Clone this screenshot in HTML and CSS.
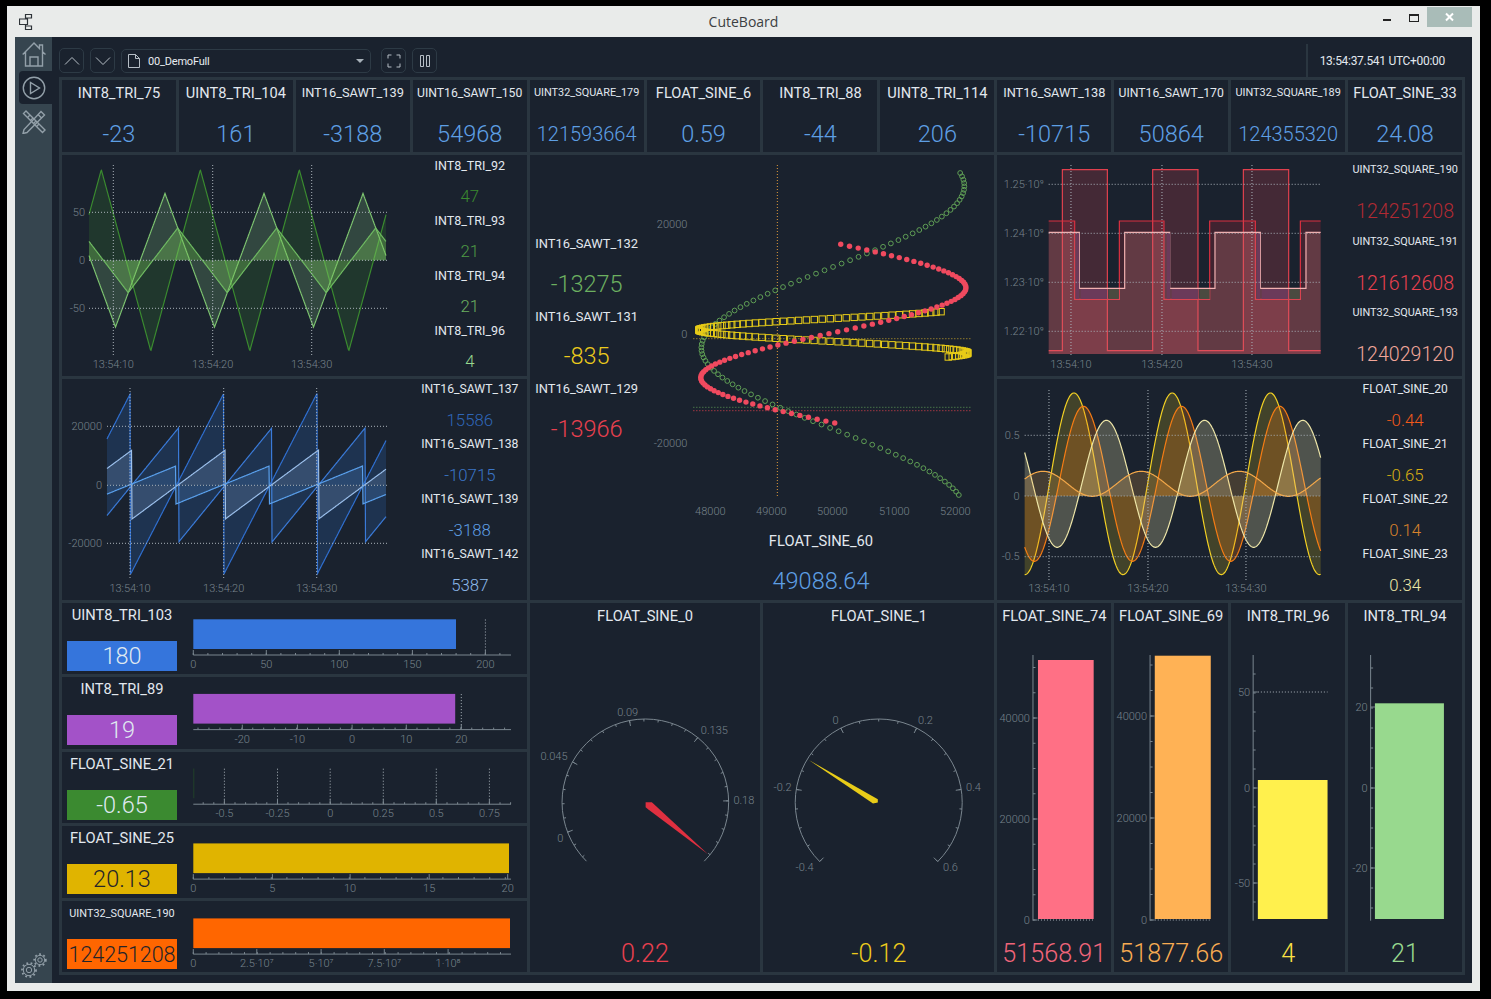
FILE: index.html
```html
<!DOCTYPE html>
<html>
<head>
    <title>CuteBoard</title>
    <meta charset="utf-8" />
    <link rel="stylesheet" href="styles.css">
</head>
<body>
<div class="window">
    <div class="titlebar">
        <svg class="appicon" width="14" height="16" viewBox="0 0 14 16">
            <path d="M6.5 .5h6v3.5h-6zM6.5 12h6v3.5h-6zM.5 5h8v5.5h-8zM6.5 4v1M6.5 10.5v1.5"/>
        </svg>
        <div class="wintitle">CuteBoard</div>
        <div class="winctl">
            <span class="minbtn"></span>
            <span class="maxbtn"></span>
            <span class="closebtn">
                <svg width="10" height="10" viewBox="0 0 10 10"><path d="M1 1.5l7 7M8 1.5l-7 7"/></svg>
            </span>
        </div>
    </div>
    <div class="client">
        <div class="sidebar">
            <svg class="sideicon" width="24" height="25" viewBox="0 0 24 25">
                <path d="M.7 12.5L12 1l5.500 5.600V3h3v6.700l3 2.800M3.500 10v14h17V10M8 24v-9h8v9"/>
            </svg>
            <div class="sidesel">
                <svg class="sideicon" width="24" height="24" viewBox="0 0 24 24">
                    <circle cx="12" cy="12" r="10.7"/><path d="M8.500 6.500v11l9-5.500z"/>
                </svg>
            </div>
            <svg class="sideicon" width="24" height="24" viewBox="0 0 24 24">
                <path d="M4 1l19 19-2.500 2.500L1.500 3.500zM8 5l-2 2M11 8l-2 2M14 11l-2 2M17 14l-2 2"/>
                <path d="M19 1.500l3.500 3.500L5 22.500l-4 1 1-4zM16 4.500l3.500 3.500"/>
            </svg>
            <svg class="sideicon gears" width="26" height="26" viewBox="0 0 26 26">
                <circle cx="8" cy="17" r="5.7"/><circle cx="8" cy="17" r="2.7"/>
                <circle class="teeth" cx="8" cy="17" r="7"/>
                <circle cx="19" cy="7" r="4.7"/><circle cx="19" cy="7" r="2.2"/>
                <circle class="teeth" cx="19" cy="7" r="5.8"/>
            </svg>
        </div>
        <div class="mainpart">
            <div class="toolbar">
                <div class="toolbtn"><svg width="16" height="10" viewBox="0 0 16 10"><path d="M1 8.500l7-7 7 7"/></svg></div>
                <div class="toolbtn"><svg width="16" height="10" viewBox="0 0 16 10"><path d="M1 1.500l7 7 7-7"/></svg></div>
                <div class="combo">
                    <svg width="12" height="14" viewBox="0 0 12 14"><path d="M.5 .5h7l4 4v9h-11zM7.500 .5v4h4"/></svg>
                    <span class="comboname">00_DemoFull</span>
                    <span class="comboarrow"></span>
                </div>
                <div class="toolbtn"><svg width="14" height="14" viewBox="0 0 14 14"><path d="M1 4.500V1h3.500M9.500 1H13v3.500M13 9.500V13H9.500M4.500 13H1V9.500"/></svg></div>
                <div class="toolbtn"><svg width="10" height="12" viewBox="0 0 10 12"><path d="M.5 .5h3v11h-3zM6.500 .5h3v11h-3z"/></svg></div>
                <div class="clock">13:54:37.541 UTC+00:00</div>
            </div>

            <div class="board">
                <div class="cell top"><div class="name s16">INT8_TRI_75</div><div class="val blue">-23</div></div>
                <div class="cell top"><div class="name s16">UINT8_TRI_104</div><div class="val blue">161</div></div>
                <div class="cell top"><div class="name s14">INT16_SAWT_139</div><div class="val blue">-3188</div></div>
                <div class="cell top"><div class="name s13">UINT16_SAWT_150</div><div class="val blue">54968</div></div>
                <div class="cell top"><div class="name s11">UINT32_SQUARE_179</div><div class="val blue small">121593664</div></div>
                <div class="cell top"><div class="name s16">FLOAT_SINE_6</div><div class="val blue">0.59</div></div>
                <div class="cell top"><div class="name s16">INT8_TRI_88</div><div class="val blue">-44</div></div>
                <div class="cell top"><div class="name s16">UINT8_TRI_114</div><div class="val blue">206</div></div>
                <div class="cell top"><div class="name s14">INT16_SAWT_138</div><div class="val blue">-10715</div></div>
                <div class="cell top"><div class="name s13">UINT16_SAWT_170</div><div class="val blue">50864</div></div>
                <div class="cell top"><div class="name s11">UINT32_SQUARE_189</div><div class="val blue small">124355320</div></div>
                <div class="cell top"><div class="name s16">FLOAT_SINE_33</div><div class="val blue">24.08</div></div>

                <div class="cell wide chartcell">
                    <svg id="triChart" class="plot"></svg>
                    <div class="legend">
                        <div class="leg"><div class="name s12b">INT8_TRI_92</div><div class="val lv green1">47</div></div>
                        <div class="leg"><div class="name s12b">INT8_TRI_93</div><div class="val lv green2">21</div></div>
                        <div class="leg"><div class="name s12b">INT8_TRI_94</div><div class="val lv green3">21</div></div>
                        <div class="leg"><div class="name s12b">INT8_TRI_96</div><div class="val lv green4">4</div></div>
                    </div>
                </div>

                <div class="cell wide scatter">
                    <div class="scatlegend">
                        <div class="scatitem"><div class="name s13b">INT16_SAWT_132</div><div class="val green3">-13275</div></div>
                        <div class="scatitem"><div class="name s13b">INT16_SAWT_131</div><div class="val yellow">-835</div></div>
                        <div class="scatitem"><div class="name s13b">INT16_SAWT_129</div><div class="val red">-13966</div></div>
                    </div>
                    <div class="scatright">
                        <svg id="scatChart" class="scatplot"></svg>
                        <div class="name s15 scatname">FLOAT_SINE_60</div>
                        <div class="val blue scatval">49088.64</div>
                    </div>
                </div>

                <div class="cell wide chartcell">
                    <svg id="squareChart" class="plot"></svg>
                    <div class="legend three">
                        <div class="leg"><div class="name s11">UINT32_SQUARE_190</div><div class="val lv big red1">124251208</div></div>
                        <div class="leg"><div class="name s11">UINT32_SQUARE_191</div><div class="val lv big red">121612608</div></div>
                        <div class="leg"><div class="name s11">UINT32_SQUARE_193</div><div class="val lv big pink">124029120</div></div>
                    </div>
                </div>

                <div class="cell wide chartcell">
                    <svg id="sawChart" class="plot"></svg>
                    <div class="legend">
                        <div class="leg"><div class="name s13">INT16_SAWT_137</div><div class="val lv blue1">15586</div></div>
                        <div class="leg"><div class="name s13">INT16_SAWT_138</div><div class="val lv blue2">-10715</div></div>
                        <div class="leg"><div class="name s13">INT16_SAWT_139</div><div class="val lv blue">-3188</div></div>
                        <div class="leg"><div class="name s13">INT16_SAWT_142</div><div class="val lv blue3">5387</div></div>
                    </div>
                </div>

                <div class="cell wide chartcell">
                    <svg id="sineChart" class="plot"></svg>
                    <div class="legend">
                        <div class="leg"><div class="name s12">FLOAT_SINE_20</div><div class="val lv orange">-0.44</div></div>
                        <div class="leg"><div class="name s12">FLOAT_SINE_21</div><div class="val lv yellow2">-0.65</div></div>
                        <div class="leg"><div class="name s12">FLOAT_SINE_22</div><div class="val lv orange2">0.14</div></div>
                        <div class="leg"><div class="name s12">FLOAT_SINE_23</div><div class="val lv pale">0.34</div></div>
                    </div>
                </div>

                <div class="bars">
                    <div class="cell barrow">
                        <div class="barleft"><div class="name s15">UINT8_TRI_103</div><div class="barbox bg-blue">180</div></div>
                        <svg id="hbar1" class="hbar"></svg>
                    </div>
                    <div class="cell barrow">
                        <div class="barleft"><div class="name s15">INT8_TRI_89</div><div class="barbox bg-purple">19</div></div>
                        <svg id="hbar2" class="hbar"></svg>
                    </div>
                    <div class="cell barrow">
                        <div class="barleft"><div class="name s15">FLOAT_SINE_21</div><div class="barbox bg-green">-0.65</div></div>
                        <svg id="hbar3" class="hbar"></svg>
                    </div>
                    <div class="cell barrow">
                        <div class="barleft"><div class="name s15">FLOAT_SINE_25</div><div class="barbox bg-gold">20.13</div></div>
                        <svg id="hbar4" class="hbar"></svg>
                    </div>
                    <div class="cell barrow">
                        <div class="barleft"><div class="name s11">UINT32_SQUARE_190</div><div class="barbox bg-orange tight">124251208</div></div>
                        <svg id="hbar5" class="hbar"></svg>
                    </div>
                </div>

                <div class="cell tall two">
                    <div class="name s15">FLOAT_SINE_0</div>
                    <svg id="gauge1" class="tallplot"></svg>
                    <div class="val red">0.22</div>
                </div>
                <div class="cell tall two">
                    <div class="name s15">FLOAT_SINE_1</div>
                    <svg id="gauge2" class="tallplot"></svg>
                    <div class="val yellow">-0.12</div>
                </div>
                <div class="cell tall">
                    <div class="name s15">FLOAT_SINE_74</div>
                    <svg id="vbar1" class="tallplot"></svg>
                    <div class="val pinkred">51568.91</div>
                </div>
                <div class="cell tall">
                    <div class="name s15">FLOAT_SINE_69</div>
                    <svg id="vbar2" class="tallplot"></svg>
                    <div class="val amber">51877.66</div>
                </div>
                <div class="cell tall">
                    <div class="name s15">INT8_TRI_96</div>
                    <svg id="vbar3" class="tallplot"></svg>
                    <div class="val yellow3">4</div>
                </div>
                <div class="cell tall">
                    <div class="name s15">INT8_TRI_94</div>
                    <svg id="vbar4" class="tallplot"></svg>
                    <div class="val green4">21</div>
                </div>
            </div>
        </div>
    </div>
</div>
<script src="charts.js"></script>
</body>
</html>
```
FILE: styles.css
```css
* {box-sizing: border-box;}
html, body {margin: 0; background: #000; height: 100%; overflow: hidden;}
body {font-family: Roboto, "Liberation Sans", sans-serif; color: #e2e8ee;}

.window {
    margin: 6px 0 0 7px;
    width: 1473px;
    height: 985px;
    padding: 0 8px 8px;
    background: #e9ebea;
    display: flex;
    flex-direction: column;}
.titlebar {
    height: 31px;
    flex: none;
    display: grid;
    grid-template-columns: 1fr auto 1fr;}
.appicon {margin: 8px 0 0 4px;}
.appicon path {fill: none; stroke: #2e3338; stroke-width: 1.2;}
.wintitle {font: 14px/31px "Open Sans", sans-serif; color: #3c4042;}
.winctl {display: flex; justify-content: flex-end; align-items: flex-start;}
.minbtn {width: 8px; height: 2px; background: #222; margin: 13px 18px 0 0;}
.maxbtn {width: 10px; height: 8px; border: 1px solid #222; border-top-width: 2px; margin: 8px 8px 0 0;}
.closebtn {
    width: 45px;
    height: 20px;
    margin-top: 1px;
    background: #a9bcb8;
    display: flex;
    align-items: center;
    justify-content: center;}
.closebtn path {fill: none; stroke: #fff; stroke-width: 2;}

.client {flex: 1; display: flex; background: #1a222e; min-height: 0;}
.sidebar {
    width: 37px;
    flex: none;
    background: #36454f;
    display: flex;
    flex-direction: column;
    align-items: center;
    padding-top: 5px;}
.sideicon {display: block; flex: none;}
.sideicon path, .sideicon circle {fill: none; stroke: #93a0a9; stroke-width: 1.4;}
.sidesel {
    width: 33px;
    height: 33px;
    margin: 4px 0 6px 3px;
    padding-right: 2px;
    background: #1a222e;
    border-radius: 4px 0 0 4px;
    display: flex;
    align-items: center;
    justify-content: center;}
.gears {margin-top: auto; margin-bottom: 4px;}
.gears circle {stroke-width: 1;}
.gears circle.teeth {stroke-width: 1.8; stroke-dasharray: 1.8 2.5;}

.mainpart {flex: 1; padding-left: 7px; padding-right: 7px; min-width: 0;}
.toolbar {height: 40px; display: flex; align-items: flex-end; padding-bottom: 4px;}
.toolbtn {
    width: 25px;
    height: 25px;
    margin-right: 6px;
    border: 1px solid #2d3a45;
    border-radius: 5px;
    display: flex;
    align-items: center;
    justify-content: center;}
.toolbtn path, .combo path {fill: none; stroke: #b6bec6; stroke-width: 1;}
.combo {
    width: 250px;
    height: 24px;
    margin-right: 10px;
    border: 1px solid #2d3a45;
    border-radius: 5px;
    display: flex;
    align-items: center;
    padding: 0 6px;}
.comboname {font-size: 11px; margin-left: 8px; flex: 1; letter-spacing: -.2px; color: #e8ecf0;}
.comboarrow {width: 0; height: 0; border: 4px solid transparent; border-top: 4px solid #a8b1b9; border-bottom: 0;}
.clock {
    margin-left: auto;
    align-self: stretch;
    margin-top: 7px;
    margin-bottom: -4px;
    border-left: 2px solid #2a3640;
    padding: 10px 20px 0 12px;
    font-size: 12px;
    letter-spacing: -.3px;
    color: #e2e8ee;}

.board {
    height: 898px;
    background: #2a3640;
    padding: 3px;
    display: grid;
    grid-template-columns: repeat(12, 1fr);
    grid-template-rows: 72px 221px 221px 369px;
    gap: 3px;}
.cell {background: #1a222e; min-width: 0; overflow: hidden;}
.name {text-align: center; white-space: nowrap; color: #e2e8ee;}
.s16 {font-size: 14.6px;}
.s15 {font-size: 14.7px;}
.s14 {font-size: 12.8px;}
.s13b {font-size: 12.9px;}
.s13 {font-size: 12.2px;}
.s12b {font-size: 12.5px;}
.s12 {font-size: 12px;}
.s11 {font-size: 10.9px;}
.val {text-align: center; font-weight: 300; font-size: 23.5px; white-space: nowrap;}
.val.small {font-size: 20px;}

.blue {color: #5e9fe4;}
.blue1 {color: #2f66b8;}
.blue2 {color: #3b76c8;}
.blue3 {color: #8cb8ea;}
.green1 {color: #3a8a2f;}
.green2 {color: #4e9a45;}
.green3 {color: #6cb060;}
.green4 {color: #98d98e;}
.red {color: #e8404f;}
.red1 {color: #b02a33;}
.pink {color: #f2a79a;}
.pinkred {color: #f0657a;}
.amber {color: #f8ac52;}
.yellow {color: #eccb1c;}
.yellow2 {color: #d8ae12;}
.yellow3 {color: #fbe044;}
.orange {color: #f2591a;}
.orange2 {color: #d8822c;}
.pale {color: #eee8a8;}

.top .name {height: 26px; line-height: 26px;}
.top .val {line-height: 36px; margin-top: 10px;}

.chartcell {grid-column: span 4; display: flex;}
.plot {width: 351px; height: 100%; flex: none; display: block;}
.legend {flex: 1; min-width: 0;}
.leg {height: 55px;}
.leg .name {height: 21px; line-height: 21px;}
.val.lv {font-size: 16.8px; line-height: 28px; margin-top: 6px;}
.three .leg {height: 71.5px;}
.three .leg .name {height: 30px; line-height: 30px;}
.val.lv.big {font-size: 19.6px; line-height: 30px; margin-top: 12px;}

.scatter {grid-column: span 4; grid-row: span 2; display: flex;}
.scatlegend {width: 114px; flex: none; padding-top: 78px;}
.scatitem {height: 72.7px;}
.scatitem .name {height: 21px; line-height: 21px;}
.scatitem .val {line-height: 28px; margin-top: 15.5px;}
.scatright {flex: 1; min-width: 0;}
.scatplot {display: block; width: 100%; height: 372px;}
.scatname {line-height: 28px; padding-left: 4px;}
.scatval {line-height: 38px; margin-top: 7px; padding-left: 4px;}

.bars {grid-column: span 4; display: grid; grid-template-rows: repeat(5, 1fr); gap: 3px; min-height: 0;}
.barrow {display: flex;}
.barleft {width: 115px; flex: none; padding-left: 5px;}
.barleft .name {height: 25px; line-height: 25px;}
.barbox {
    height: 30px;
    margin-top: 13px;
    text-align: center;
    font-weight: 300;
    font-size: 23.5px;
    line-height: 31px;
    color: #dfe8f0;}
.bg-blue {background: #3575dc;}
.bg-purple {background: #a352c8;}
.bg-green {background: #3b8a30;}
.bg-gold {background: #e0b400; color: #24242a;}
.bg-orange {background: #ff6600; color: #24242a;}
.tight {font-size: 21.6px; letter-spacing: -.1px;}
.hbar {flex: 1; min-width: 0; height: 100%; display: block;}

.tall {display: grid; grid-template-rows: 25px 1fr 38px;}
.tall.two {grid-column: span 2;}
.tall .name {line-height: 26px;}
.tall .val {line-height: 40px; font-size: 25.2px;}
.tallplot {display: block; width: 100%; height: 100%;}

svg text {font-family: Roboto, "Liberation Sans", sans-serif; font-size: 11px; font-weight: 300; fill: #77828c; dominant-baseline: central;}
.dots {stroke: #aab3bb; stroke-width: 1; stroke-dasharray: 1 2; fill: none;}
.axis {stroke: #7a868f; stroke-width: 1; fill: none;}
```
FILE: charts.js
```js
// every plot uses page coordinates, so numbers read straight off the screen
function open(id) {
    let s = document.getElementById(id);
    let r = s.getBoundingClientRect();
    s.setAttribute('viewBox', [r.left, r.top, r.width, r.height].join(' '));
    return s;
}
function dots(x1, y1, x2, y2, color) {
    let c = color ? ` style="stroke:${color}"` : '';
    return `<line class="dots" x1="${x1}" y1="${y1}" x2="${x2}" y2="${y2}"${c}/>`;
}
function seg(x1, y1, x2, y2) {
    return `<line class="axis" x1="${x1}" y1="${y1}" x2="${x2}" y2="${y2}"/>`;
}
function label(x, y, str, anchor) {
    return `<text x="${x}" y="${y}" text-anchor="${anchor || 'middle'}">${str}</text>`;
}
function area(pts, base, stroke, fill) {
    let d = 'M' + pts.map(p => p[0].toFixed(1) + ' ' + p[1].toFixed(1)).join('L');
    let last = pts[pts.length - 1][0], first = pts[0][0];
    return `<path d="${d}L${last} ${base}L${first} ${base}Z" fill="${fill}"/>` +
        `<path d="${d}" fill="none" stroke="${stroke}" stroke-width="1.2"/>`;
}
function sample(x0, x1, fn) {
    let pts = [];
    for (let x = x0; x <= x1; x += .5) pts.push([x, fn(x)]);
    return pts;
}
function mod1(v) {return v - Math.floor(v);}

function timeGrid(xs, top, bottom, labelY) {
    let out = '', names = ['13:54:10', '13:54:20', '13:54:30'];
    xs.forEach((x, i) => {
        out += dots(x, top, x, bottom);
        out += label(x, labelY, names[i]);
    });
    return out;
}

/* triangles */
function tri(peak, period, zero, amp) {
    return x => {
        let p = mod1((x - peak) / period);
        return zero - amp * (p < .5 ? 1 - 4 * p : 4 * p - 3);
    };
}
let c = open('triChart');
c.innerHTML =
    area(sample(89, 386, tri(101.3, 99, 260.3, 90.6)), 260.3, '#3a8a2f', 'rgba(58,138,47,.2)') +
    area(sample(89, 386, tri(165, 99, 260.3, 66.8)), 260.3, '#7cc26f', 'rgba(150,220,140,.2)') +
    area(sample(89, 386, tri(177.7, 99, 260.3, 32.3)), 260.3, '#6fbb62', 'rgba(120,200,90,.35)') +
    dots(89, 212.3, 387, 212.3) + dots(89, 260.3, 387, 260.3) + dots(89, 308.3, 387, 308.3) +
    timeGrid([113.3, 212.7, 311.7], 165, 355, 364) +
    label(85, 212, '50', 'end') + label(85, 260, '0', 'end') + label(85, 308, '-50', 'end');

/* sawtooth */
function saw(peak, period, top, bottom) {
    return x => bottom + (top - bottom) * mod1((x - peak) / period);
}
c = open('sawChart');
c.innerHTML =
    area(sample(107, 386, saw(130.5, 93.3, 393.3, 574.3)), 485.3, '#2f6fd0', 'rgba(52,120,220,.2)') +
    area(sample(107, 386, saw(178.7, 93.3, 427.7, 542)), 485.3, '#3a7ad8', 'rgba(52,120,220,.2)') +
    area(sample(107, 386, saw(132, 93.3, 450, 519)), 485.3, '#9cc0ec', 'rgba(160,200,250,.18)') +
    area(sample(107, 386, saw(176, 93.3, 466, 504)), 485.3, '#5aa0ec', 'rgba(90,160,236,.2)') +
    dots(107, 426.3, 387, 426.3) + dots(107, 485.3, 387, 485.3) + dots(107, 543.3, 387, 543.3) +
    timeGrid([130, 223.7, 316.7], 388, 580, 588) +
    label(102, 426, '20000', 'end') + label(102, 485, '0', 'end') + label(102, 543, '-20000', 'end');

/* square waves */
function square(edges, hi, lo, startHigh) {
    let pts = [], now = startHigh, x = 1049;
    pts.push([x, now ? hi : lo]);
    edges.forEach(e => {
        pts.push([e, now ? hi : lo]);
        now = !now;
        pts.push([e, now ? hi : lo]);
    });
    pts.push([1321, now ? hi : lo]);
    return pts;
}
// the two odd coloured patches where only some of the fills overlap
let patches = '';
[0, 91, 181].forEach(d => {
    patches += `<rect x="${1109 + d}" y="289" width="10" height="10" fill="#4a4a40"/>`;
    patches += `<rect x="${1081 + d}" y="289" width="26.5" height="10" fill="#6b3a5a"/>`;
    patches += `<rect x="${1076 + d}" y="233" width="3.5" height="66" fill="#6b3a5a"/>`;
});
c = open('squareChart');
c.innerHTML =
    area(square([1062.7, 1107.7, 1153, 1198.3, 1243.7, 1289], 169.7, 350.7, false), 354, '#e0404e', 'rgba(240,70,90,.2)') +
    area(square([1075, 1119.7, 1164.3, 1210, 1255.7, 1300.7], 221, 299.3, true), 354, '#d93040', 'rgba(220,40,60,.2)') +
    area(square([1079.7, 1125, 1170, 1215.3, 1260.7, 1306.3], 232.3, 288.3, true), 354, '#f2b0b0', 'rgba(235,150,150,.2)') +
    patches +
    dots(1049, 184.3, 1321, 184.3) + dots(1049, 233.3, 1321, 233.3) +
    dots(1049, 282.3, 1321, 282.3) + dots(1049, 331.3, 1321, 331.3) +
    timeGrid([1071.3, 1162.3, 1252.3], 165, 356, 364) +
    label(1044, 184, '1.25·10⁹', 'end') + label(1044, 233, '1.24·10⁹', 'end') +
    label(1044, 282, '1.23·10⁹', 'end') + label(1044, 331, '1.22·10⁹', 'end');

/* sines */
function sine(peak, center, amp) {
    return x => center - amp * Math.cos(2 * Math.PI * (x - peak) / 98.2);
}
c = open('sineChart');
c.innerHTML =
    area(sample(1025, 1321, sine(1074.3, 483.8, 90.8)), 496, '#f2d024', 'rgba(230,200,30,.2)') +
    area(sample(1025, 1321, sine(1083.7, 483.8, 77.5)), 496, '#f57c14', 'rgba(245,124,20,.25)') +
    area(sample(1025, 1321, sine(1106.7, 483.8, 63.5)), 496, '#eee6a8', 'rgba(238,230,170,.25)') +
    area(sample(1025, 1321, sine(1043.3, 483.8, 12.5)), 496, '#f5a94a', 'rgba(245,169,74,.2)') +
    dots(1025, 435.3, 1321, 435.3) + dots(1025, 496, 1321, 496) + dots(1025, 556.7, 1321, 556.7) +
    timeGrid([1049.3, 1148.3, 1246.3], 390, 580, 588) +
    label(1020, 435, '0.5', 'end') + label(1020, 496, '0', 'end') + label(1020, 556, '-0.5', 'end');

/* xy scatter: y runs evenly, x swings round 833 */
function curve(from, to, count, maxAt, half, center, amp) {
    let pts = [];
    for (let i = 0; i < count; i++) {
        let y = from + (to - from) * i / (count - 1);
        pts.push([center + amp * Math.cos(Math.PI * (y - maxAt) / half), y]);
    }
    return pts;
}
let scat = '';
curve(173, 495, 97, 186, 162, 832.5, 131.5).forEach(p => {
    scat += `<circle cx="${p[0]}" cy="${p[1]}" r="2.4" fill="none" stroke="#5f9e55"/>`;
});
curve(311.7, 357, 105, 353, 23, 833, 134.5).forEach(p => {
    scat += `<rect x="${p[0] - 3.2}" y="${p[1] - 3.2}" width="6.4" height="6.4" fill="none" stroke="#e8cc18"/>`;
});
curve(244.3, 423, 95, 287.7, 90, 833, 132.6).forEach(p => {
    scat += `<circle cx="${p[0]}" cy="${p[1]}" r="2.7" fill="#f04a5f"/>`;
});
c = open('scatChart');
c.innerHTML =
    dots(693, 338.7, 970, 338.7, '#c9a52a') + dots(693, 407.3, 970, 407.3, '#5f9e55') + dots(693, 410.7, 970, 410.7, '#e0404e') +
    dots(777, 165, 777, 498, '#e09a3a') + scat +
    label(687, 224, '20000', 'end') + label(687, 334, '0', 'end') + label(687, 443, '-20000', 'end') +
    label(710, 511, '48000') + label(771, 511, '49000') + label(832, 511, '50000') +
    label(894, 511, '51000') + label(955, 511, '52000');

/* horizontal bars */
function hbar(id, o) {
    let out = '', s = open(id);
    let left = 193.3, right = 511;
    if (o.bar) out += `<rect x="${left}" y="${o.axis - 35.7}" width="${o.bar - left}" height="29.7" fill="${o.color}"/>`;
    else out += `<rect x="${left}" y="${o.axis - 35.7}" width="1" height="29.7" fill="#22402a"/>`;
    (o.grid || []).forEach(x => {out += dots(x, o.axis - 35.5, x, o.axis);});
    out += seg(left, o.axis, right, o.axis);
    for (let x = o.minorFrom; x < right; x += o.minor) out += seg(x, o.axis - 2, x, o.axis);
    o.major.forEach(m => {
        out += seg(m[0], o.axis - 5, m[0], o.axis);
        out += label(m[0], o.axis + 9.5, m[1]);
    });
    s.innerHTML = out;
}
hbar('hbar1', {axis: 655, bar: 456, color: '#3575dc', grid: [485.4], minorFrom: 193.3, minor: 14.6,
    major: [[193.3, '0'], [266.3, '50'], [339.3, '100'], [412.4, '150'], [485.4, '200']]});
hbar('hbar2', {axis: 730, bar: 455.2, color: '#a352c8', grid: [461.3], minorFrom: 198, minor: 10.95,
    major: [[242.3, '-20'], [297.4, '-10'], [352.1, '0'], [406.3, '10'], [461.3, '20']]});
hbar('hbar3', {axis: 804, grid: [224.4, 277.5, 330.2, 383.3, 436.3, 489.4], minorFrom: 203.2, minor: 10.6,
    major: [[224.4, '-0.5'], [277.5, '-0.25'], [330.2, '0'], [383.3, '0.25'], [436.3, '0.5'], [489.4, '0.75']]});
hbar('hbar4', {axis: 879.3, bar: 509, color: '#e0b400', minorFrom: 193.3, minor: 15.6,
    major: [[193.3, '0'], [272.4, '5'], [350.1, '10'], [429.2, '15'], [507.7, '20']]});
hbar('hbar5', {axis: 953.7, bar: 510, color: '#ff6600', minorFrom: 193.3, minor: 12.8,
    major: [[193.3, '0'], [256.8, '2.5·10⁷'], [321.1, '5·10⁷'], [384.3, '7.5·10⁷'], [448.1, '1·10⁸']]});

/* vertical bars */
function vbar(id, o) {
    let out = '', s = open(id);
    out += `<rect x="${o.x0}" y="${o.top}" width="${o.x1 - o.x0}" height="${919 - o.top}" fill="${o.color}"/>`;
    (o.grid || []).forEach(y => {out += dots(o.x0, y, o.x1, y);});
    out += seg(o.axis, 655, o.axis, 920.7);
    o.minor.forEach(y => {out += seg(o.axis, y, o.axis + 2.5, y);});
    o.major.forEach(m => {
        out += seg(o.axis, m[0], o.axis + 4.5, m[0]);
        out += label(o.axis - 3, m[0], m[1], 'end');
    });
    s.innerHTML = out;
}
function steps(from, step, to) {
    let l = [];
    for (let y = from; y > to; y -= step) l.push(y);
    return l;
}
vbar('vbar1', {axis: 1033.3, x0: 1038.3, x1: 1094, top: 660, color: '#ff7085', grid: [920],
    major: [[920, '0'], [819, '20000'], [718, '40000']], minor: steps(920, 25.25, 655)});
vbar('vbar2', {axis: 1150.3, x0: 1155, x1: 1211, top: 655.7, color: '#ffb255', grid: [920],
    major: [[920, '0'], [818, '20000'], [716, '40000']], minor: steps(920, 25.5, 655)});
vbar('vbar3', {axis: 1253.3, x0: 1258, x1: 1327.7, top: 780, color: '#fff04d', grid: [692],
    major: [[883, '-50'], [788, '0'], [692, '50']], minor: steps(902, 19, 655)});
vbar('vbar4', {axis: 1370.7, x0: 1375, x1: 1444, top: 703.3, color: '#98d98e',
    major: [[868, '-20'], [788, '0'], [707, '20']], minor: steps(908, 20, 655)});

/* dial gauges, angles in degrees from straight up */
function gauge(id, o) {
    let s = open(id), out = '', r = o.r;
    let at = (a, d) => {
        let t = a * Math.PI / 180;
        return [o.cx + d * Math.sin(t), o.cy - d * Math.cos(t)];
    };
    let a0 = at(-135, r), a1 = at(135, r);
    out += `<path class="axis" d="M${a0[0]} ${a0[1]}A${r} ${r} 0 1 1 ${a1[0]} ${a1[1]}"/>`;
    for (let a = o.minorFrom; a <= 135; a += o.minor) {
        let p = at(a, r), q = at(a, r - 2.5);
        out += seg(p[0], p[1], q[0], q[1]);
    }
    o.major.forEach(m => {
        let p = at(m[0], r), q = at(m[0], r - 5.5);
        out += seg(p[0], p[1], q[0], q[1]);
        out += label(m[2], m[3], m[1]);
    });
    out += `<polygon points="${o.needle}" fill="${o.color}"/>`;
    s.innerHTML = out;
}
gauge('gauge1', {cx: 645, cy: 802.3, r: 83.3, color: '#e03040', minorFrom: -131, minor: 10,
    needle: '707.7,854.3 651.5,802.3 645.3,802.3 645.3,807.3 647.7,809.3',
    major: [[-111, '0', 560, 838], [-61, '0.045', 553.7, 756], [-11, '0.09', 627.3, 712], [39, '0.135', 714, 730], [89, '0.18', 743.5, 800]]});
gauge('gauge2', {cx: 879.2, cy: 802.5, r: 83.5, color: '#e8cc18', minorFrom: -135, minor: 13.5,
    needle: '809.3,760 878.3,799.3 878.3,802.5 873.5,803.5',
    major: [[-135, '-0.4', 805, 867], [-81, '-0.2', 783, 787], [-27, '0', 836, 720], [27, '0.2', 926, 720], [81, '0.4', 974, 787], [135, '0.6', 951, 867]]});
```
